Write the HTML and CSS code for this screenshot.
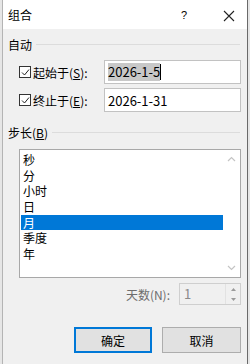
FILE: index.html
```html
<!DOCTYPE html>
<html lang="zh-CN">
<head>
<meta charset="utf-8">
<title>组合</title>
<link rel="stylesheet" href="styles.css">
</head>
<body>
<div class="dialog">
    <div class="titlebar">
        <span class="title">组合</span>
        <span class="help">?</span>
        <span class="close">
            <svg width="12" height="12" viewBox="0 0 12 12"><path d="M1 1L11 11M11 1L1 11" stroke="#222" stroke-width="1.1" fill="none"/></svg>
        </span>
    </div>

    <div class="content">
        <div class="group-head"><span>自动</span><i></i></div>

        <div class="row">
            <label class="check"><span class="box"><svg width="9" height="9" viewBox="0 0 9 9"><path d="M1 4.5L3.5 7L8 1.5" stroke="#222" stroke-width="1" fill="none"/></svg></span>起始于(<u>S</u>):</label>
            <div class="field"><span class="sel">2026-1-5</span><span class="caret"></span></div>
        </div>
        <div class="row">
            <label class="check"><span class="box"><svg width="9" height="9" viewBox="0 0 9 9"><path d="M1 4.5L3.5 7L8 1.5" stroke="#222" stroke-width="1" fill="none"/></svg></span>终止于(<u>E</u>):</label>
            <div class="field">2026-1-31</div>
        </div>

        <div class="group-head step"><span>步长(<u>B</u>)</span><i></i></div>

        <div class="listbox">
            <ul class="items">
                <li>秒</li>
                <li>分</li>
                <li>小时</li>
                <li>日</li>
                <li class="active">月</li>
                <li>季度</li>
                <li>年</li>
            </ul>
            <div class="scroll">
                <svg width="9" height="6" viewBox="0 0 9 6"><path d="M1 5L4.5 1.5L8 5" stroke="#c4c4c4" stroke-width="1.2" fill="none"/></svg>
                <svg width="9" height="6" viewBox="0 0 9 6"><path d="M1 1L4.5 4.5L8 1" stroke="#c4c4c4" stroke-width="1.2" fill="none"/></svg>
            </div>
        </div>

        <div class="days">
            <span class="days-label">天数(N):</span>
            <div class="spin">
                <span class="spin-val">1</span>
                <div class="spin-btns">
                    <span><svg width="5" height="3" viewBox="0 0 5 3"><path d="M0 3L2.5 0L5 3Z" fill="#9a9a9a"/></svg></span>
                    <span><svg width="5" height="3" viewBox="0 0 5 3"><path d="M0 0L2.5 3L5 0Z" fill="#9a9a9a"/></svg></span>
                </div>
            </div>
        </div>

        <div class="buttons">
            <button class="btn default">确定</button>
            <button class="btn">取消</button>
        </div>
    </div>
</div>
</body>
</html>
```

FILE: styles.css
```css
html, body {
    margin: 0;
    padding: 0;
}

body {
    width: 250px;
    height: 364px;
    overflow: hidden;
    background-color: #e6e6e6;
    font-family: "Noto Sans CJK SC", "Noto Sans", sans-serif;
    font-size: 12px;
    color: #000;
}

.dialog {
    margin-left: 2px;
    width: 244px;
    height: 364px;
    border-left: 1px solid #b4b4b4;
    border-right: 1px solid #6a6a6a;
    background-color: #f0f0f0;
}

.titlebar {
    height: 29px;
    background-color: #fff;
    display: flex;
    align-items: center;
    padding-left: 5px;
}

.title { flex: 1; font-size: 12px; }

.help {
    width: 30px;
    font-size: 11px;
    font-family: "Liberation Sans", sans-serif;
}

.close {
    width: 36px;
    display: flex;
    justify-content: center;
    padding-top: 2px;
}

.content {
    padding: 0 5px 0 5px;
}

.group-head {
    display: flex;
    align-items: center;
    height: 18px;
    margin-top: 6px;
}

.group-head i {
    flex: 1;
    height: 1px;
    margin-left: 4px;
    margin-right: 2px;
    background-color: #dcdcdc;
}

.group-head.step { margin-top: 11px; }

.row {
    display: flex;
    align-items: center;
    margin-left: 11px;
    height: 24px;
    margin-bottom: 4px;
}

.row:first-of-type { margin-top: 0; }

.group-head + .row { margin-top: 7px; }

.check {
    display: flex;
    align-items: center;
    width: 85px;
}

.box {
    width: 10px;
    height: 10px;
    border: 1px solid #333;
    display: flex;
    align-items: center;
    justify-content: center;
    margin-right: 2px;
    background-color: #fff;
}

.field {
    flex: 1;
    margin-right: 1px;
    height: 22px;
    border: 1px solid #c2c2c2;
    background-color: #fff;
    display: flex;
    align-items: center;
    padding-left: 3px;
    font-size: 13px;
}

.sel {
    background-color: #c8c8c8;
    line-height: 18px;
}

.caret {
    width: 1px;
    height: 16px;
    background-color: #000;
}

.listbox {
    margin: 8px 1px 0 11px;
    height: 127px;
    border: 1px solid #a8a8a8;
    background-color: #fff;
    display: flex;
}

.items {
    list-style: none;
    margin: 0;
    padding: 2px 0 0 1px;
    flex: 1;
}

.items li {
    height: 15.7px;
    line-height: 15.7px;
    padding-left: 2px;
}

.items li.active {
    background-color: #0078d7;
    color: #fff;
}

.scroll {
    width: 17px;
    display: flex;
    flex-direction: column;
    justify-content: space-between;
    align-items: center;
    padding: 6px 0 6px 0;
}

.days {
    display: flex;
    justify-content: flex-end;
    align-items: center;
    margin-top: 5px;
    margin-right: 1px;
}

.days-label {
    color: #6d6d6d;
    margin-right: 9px;
}

.spin {
    width: 60px;
    height: 20px;
    border: 1px solid #cfcfcf;
    background-color: #f0f0f0;
    display: flex;
}

.spin-val {
    flex: 1;
    color: #8a8a8a;
    padding-left: 4px;
    font-size: 13px;
    line-height: 20px;
}

.spin-btns {
    width: 15px;
    display: flex;
    flex-direction: column;
}

.spin-btns span {
    flex: 1;
    display: flex;
    align-items: center;
    justify-content: center;
    border-left: 1px solid #e2e2e2;
}

.buttons {
    display: flex;
    justify-content: flex-end;
    gap: 10px;
    margin-top: 22px;
    margin-right: 1px;
}

.btn {
    width: 79px;
    height: 26px;
    background-color: #e1e1e1;
    border: 1px solid #adadad;
    font-family: inherit;
    font-size: 12px;
    color: #000;
    padding: 0;
}

.btn.default {
    width: 78px;
    border: 2px solid #0078d7;
}
```
